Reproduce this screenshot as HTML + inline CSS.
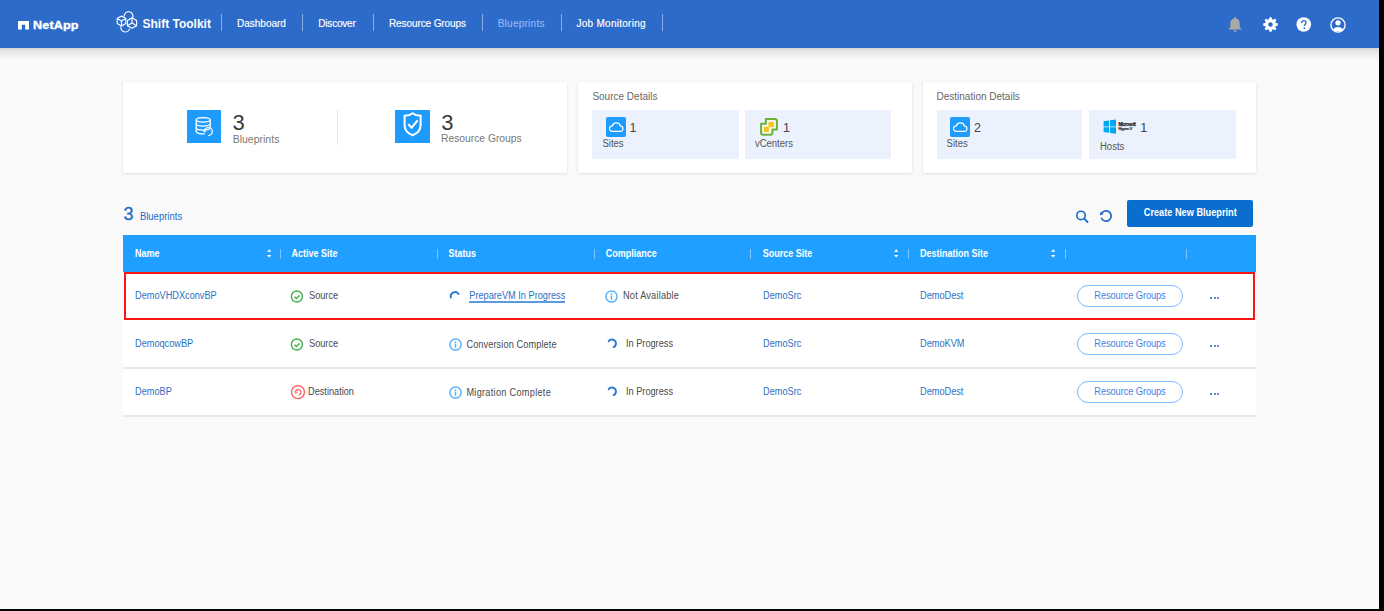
<!DOCTYPE html>
<html><head><meta charset="utf-8"><style>
html,body{margin:0;padding:0;width:1384px;height:611px;overflow:hidden;background:#fafafa;font-family:"Liberation Sans", sans-serif}
body>div,body>svg{position:absolute}
.t{line-height:1;white-space:nowrap}
</style></head><body>
<div style="left:0px;top:0px;width:1384.00px;height:47.50px;background:#2d6bcb"></div>
<div style="left:0px;top:47.5px;width:1384.00px;height:12.50px;background:linear-gradient(#d6d6d6,#e4e4e4 25%,#fafafa)"></div>
<svg style="left:18px;top:21px" width="11.2" height="8.5" viewBox="0 0 11.2 8.5"><path d="M0 0H11.2V8.5H7.2V3.8H3.8V8.5H0Z" fill="#fff"/></svg>
<div class="t" style="left:33.2px;top:19.93px;font-size:11.3px;color:#fff;font-weight:bold;letter-spacing:0.1px;transform:scale(1.12,1.0);transform-origin:0 9.57px;-webkit-text-stroke:0.35px #fff;">NetApp</div>
<svg style="left:112px;top:8px" width="30" height="28" viewBox="0 0 30 28"><g fill="none" stroke="#fff" stroke-width="1.15" stroke-linejoin="round"><path d="M9.5 8L13.8 10.5V15.5L9.5 18L5.2 15.5V10.5Z"/><path d="M5.2 10.5L9.5 13L13.8 10.5M9.5 13V18"/><path d="M20 9.7L24.6 12.4V17.7L20 20.3L15.4 17.7V12.4Z"/><path d="M20 9.7V15L15.4 17.7M20 15L24.6 17.7"/><path d="M12.2 8.6A4.4 4.4 0 1 1 20.6 9.9"/><path d="M9 18.3A4.3 4.3 0 1 0 17.6 20.6"/></g></svg>
<div class="t" style="left:142.5px;top:18.24px;font-size:12px;color:#fff;font-weight:bold;">Shift Toolkit</div>
<div style="left:221px;top:13.7px;width:1.00px;height:17.30px;background:rgba(255,255,255,.45)"></div>
<div style="left:302px;top:13.7px;width:1.00px;height:17.30px;background:rgba(255,255,255,.45)"></div>
<div style="left:373px;top:13.7px;width:1.00px;height:17.30px;background:rgba(255,255,255,.45)"></div>
<div style="left:481.5px;top:13.7px;width:1.00px;height:17.30px;background:rgba(255,255,255,.45)"></div>
<div style="left:561px;top:13.7px;width:1.00px;height:17.30px;background:rgba(255,255,255,.45)"></div>
<div style="left:662px;top:13.7px;width:1.00px;height:17.30px;background:rgba(255,255,255,.45)"></div>
<div class="t" style="left:237px;top:18.54px;font-size:10px;color:#fff;transform:scale(1.0,1.05);transform-origin:0 8.46px;-webkit-text-stroke:0.15px #fff;">Dashboard</div>
<div class="t" style="left:318.3px;top:18.54px;font-size:10px;color:#fff;letter-spacing:-0.2px;transform:scale(1.0,1.05);transform-origin:0 8.46px;-webkit-text-stroke:0.15px #fff;">Discover</div>
<div class="t" style="left:389px;top:18.54px;font-size:10px;color:#fff;letter-spacing:-0.1px;transform:scale(1.0,1.05);transform-origin:0 8.46px;-webkit-text-stroke:0.15px #fff;">Resource Groups</div>
<div class="t" style="left:497.7px;top:18.54px;font-size:10px;color:#8fb9f0;letter-spacing:0.25px;transform:scale(1.0,1.05);transform-origin:0 8.46px;-webkit-text-stroke:0.15px #8fb9f0;">Blueprints</div>
<div class="t" style="left:576.5px;top:18.54px;font-size:10px;color:#fff;letter-spacing:0.27px;transform:scale(1.0,1.05);transform-origin:0 8.46px;-webkit-text-stroke:0.15px #fff;">Job Monitoring</div>
<svg style="left:1228px;top:16px" width="14" height="17" viewBox="0 0 14 17"><path d="M7 1.2c.8 0 1.3.5 1.3 1.2 2.3.6 3.4 2.5 3.4 5v3.6l1.6 1.8v.8H.7v-.8l1.6-1.8V7.4c0-2.5 1.1-4.4 3.4-5C5.7 1.7 6.2 1.2 7 1.2zM5.4 14.2h3.2a1.6 1.6 0 0 1-3.2 0z" fill="#a9a9a9"/></svg>
<svg style="left:1262.1px;top:16.1px" width="17" height="17" viewBox="0 0 17 17"><path fill="#fff" fill-rule="evenodd" d="M13.50 6.73 L15.84 7.54 L15.84 9.46 L13.50 10.27 L13.28 10.78 L14.37 13.01 L13.01 14.37 L10.78 13.28 L10.27 13.50 L9.46 15.84 L7.54 15.84 L6.73 13.50 L6.22 13.28 L3.99 14.37 L2.63 13.01 L3.72 10.78 L3.50 10.27 L1.16 9.46 L1.16 7.54 L3.50 6.73 L3.72 6.22 L2.63 3.99 L3.99 2.63 L6.22 3.72 L6.73 3.50 L7.54 1.16 L9.46 1.16 L10.27 3.50 L10.78 3.72 L13.01 2.63 L14.37 3.99 L13.28 6.22Z M10.8 8.5 A2.3 2.3 0 1 0 6.2 8.5 A2.3 2.3 0 1 0 10.8 8.5Z"/></svg>
<svg style="left:1296px;top:17px" width="16" height="16" viewBox="0 0 16 16"><circle cx="7.75" cy="7.5" r="7.3" fill="#fff"/><path d="M5.6 5.9c0-1.4 1-2.3 2.2-2.3s2.2.8 2.2 2c0 1.5-1.6 1.6-1.6 3.3" fill="none" stroke="#2d6bcb" stroke-width="1.4"/><circle cx="8.4" cy="11.2" r=".85" fill="#2d6bcb"/></svg>
<svg style="left:1330px;top:16.5px" width="17" height="16" viewBox="0 0 17 16"><circle cx="8" cy="8" r="7.1" fill="none" stroke="#fff" stroke-width="1.3"/><circle cx="8" cy="5.8" r="2.6" fill="#fff"/><path d="M2.9 12.2Q8 8 13.1 12.2A6.6 6.6 0 0 1 2.9 12.2Z" fill="#fff"/></svg>
<div style="left:123px;top:82px;width:444.00px;height:90.50px;background:#fff;box-shadow:0 1px 3px rgba(0,0,0,.10),0 0 1px rgba(0,0,0,.06)"></div>
<div style="left:578px;top:82px;width:334.00px;height:90.50px;background:#fff;box-shadow:0 1px 3px rgba(0,0,0,.10),0 0 1px rgba(0,0,0,.06)"></div>
<div style="left:923px;top:82px;width:333.00px;height:90.50px;background:#fff;box-shadow:0 1px 3px rgba(0,0,0,.10),0 0 1px rgba(0,0,0,.06)"></div>
<div style="left:187px;top:109.5px;width:34.00px;height:33.50px;background:#1e9bff"></div>
<svg style="left:186px;top:108px" width="36" height="36" viewBox="0 0 36 36"><g fill="none" stroke="#fff" stroke-width="1.25" stroke-linecap="round"><ellipse cx="17.2" cy="11.8" rx="7" ry="2.3"/><path d="M10.2 11.8V23.6M24.2 11.8V18.5"/><path d="M10.2 15.7A7 2.3 0 0 0 24.2 15.7M10.2 19.7A7 2.3 0 0 0 24.2 19.7M10.2 23.6A7 2.3 0 0 0 18.3 25.9"/><path d="M18.3 23.4A4 4 0 1 1 22.6 27.5"/></g><circle cx="18.6" cy="23.4" r="1.1" fill="#fff"/></svg>
<div class="t" style="left:232.5px;top:111.98px;font-size:22px;color:#3a3a3a;">3</div>
<div class="t" style="left:232.7px;top:134.31px;font-size:10.5px;color:#777;transform:scale(1.0,1.05);transform-origin:0 8.89px;">Blueprints</div>
<div style="left:337px;top:109.5px;width:1.00px;height:35.50px;background:#e6e6e6"></div>
<div style="left:395px;top:109.5px;width:34.70px;height:33.50px;background:#1e9bff"></div>
<svg style="left:394px;top:108px" width="36" height="36" viewBox="0 0 36 36"><path d="M18.6 5.3C20.6 6.9 23.6 7.7 26.6 7.8V17C26.6 22 23 25.5 18.6 27.2 14.2 25.5 10.6 22 10.6 17V7.8C13.6 7.7 16.6 6.9 18.6 5.3Z" fill="none" stroke="#fff" stroke-width="2"/><path d="M14.3 16.3L17.6 19.7 23.6 12.4" fill="none" stroke="#fff" stroke-width="2.2"/></svg>
<div class="t" style="left:441.3px;top:111.98px;font-size:22px;color:#3a3a3a;">3</div>
<div class="t" style="left:441px;top:134.48px;font-size:10.3px;color:#777;transform:scale(1.0,1.05);transform-origin:0 8.72px;">Resource Groups</div>
<div class="t" style="left:592.4px;top:91.73px;font-size:10px;color:#666;transform:scale(1.0,1.05);transform-origin:0 8.46px;">Source Details</div>
<div style="left:592px;top:109.6px;width:147.00px;height:49.00px;background:#ebf2fd"></div>
<div style="left:605.5px;top:117px;width:20.30px;height:20.00px;background:#1e9bff;border-radius:2px"></div>
<svg style="left:605.5px;top:117px" width="20" height="20" viewBox="0 0 20 20"><path d="M6.2 14.4A2.8 2.8 0 0 1 6.4 8.8A4.2 4.2 0 0 1 14.5 9.2A2.6 2.6 0 0 1 14.1 14.4Z" fill="none" stroke="#fff" stroke-width="1.2"/></svg>
<div class="t" style="left:629.5px;top:121.62px;font-size:12.5px;color:#444;">1</div>
<div class="t" style="left:602.5px;top:139.26px;font-size:9.5px;color:#555;transform:scale(1.0,1.1);transform-origin:0 8.04px;">Sites</div>
<div style="left:745px;top:109.6px;width:146.00px;height:49.00px;background:#ebf2fd"></div>
<svg style="left:756px;top:114px" width="26" height="26" viewBox="0 0 26 26"><path d="M9.8 4.9H18.9Q20.9 4.9 20.9 6.9V15.4H16.4V18.7Q16.4 20.7 14.4 20.7H7.1Q5.1 20.7 5.1 18.7V9.8H9.8Z" fill="#f4f9ee" stroke="#6ab23c" stroke-width="2" stroke-linejoin="round"/><rect x="7.8" y="12.7" width="5.1" height="5.3" fill="#f8c41a"/><rect x="12.5" y="8" width="5.3" height="5.1" fill="#f8c41a"/></svg>
<div class="t" style="left:783px;top:121.62px;font-size:12.5px;color:#444;">1</div>
<div class="t" style="left:754.9px;top:139.36px;font-size:9.5px;color:#555;transform:scale(1.0,1.1);transform-origin:0 8.04px;">vCenters</div>
<div class="t" style="left:936.5px;top:91.73px;font-size:10px;color:#666;transform:scale(1.0,1.05);transform-origin:0 8.46px;">Destination Details</div>
<div style="left:937px;top:109.6px;width:145.00px;height:49.00px;background:#ebf2fd"></div>
<div style="left:950px;top:117px;width:20.30px;height:20.00px;background:#1e9bff;border-radius:2px"></div>
<svg style="left:950px;top:117px" width="20" height="20" viewBox="0 0 20 20"><path d="M6.2 14.4A2.8 2.8 0 0 1 6.4 8.8A4.2 4.2 0 0 1 14.5 9.2A2.6 2.6 0 0 1 14.1 14.4Z" fill="none" stroke="#fff" stroke-width="1.2"/></svg>
<div class="t" style="left:974px;top:121.62px;font-size:12.5px;color:#444;">2</div>
<div class="t" style="left:946.6px;top:139.26px;font-size:9.5px;color:#555;transform:scale(1.0,1.1);transform-origin:0 8.04px;">Sites</div>
<div style="left:1089px;top:109.6px;width:147.00px;height:49.00px;background:#ebf2fd"></div>
<svg style="left:1100px;top:115px" width="20" height="23" viewBox="0 0 20 23"><path d="M3.6 6.2L9 5.4V11.4H3.6Z M9.9 5.3L16 4.5V11.4H9.9Z M3.6 12.2H9V17.8L3.6 16.9Z M9.9 12.2H16V18.8L9.9 17.9Z" fill="#00a6ef"/></svg>
<div class="t" style="left:1118.4px;top:123.31px;font-size:4.6px;color:#2a2a2a;font-weight:bold;letter-spacing:-0.4px;-webkit-text-stroke:0.25px #2a2a2a;">Microsoft</div>
<div class="t" style="left:1118.4px;top:127.98px;font-size:3.8px;color:#2a2a2a;font-weight:bold;letter-spacing:-0.1px;-webkit-text-stroke:0.2px #2a2a2a;">Hyper-V</div>
<div class="t" style="left:1140.3px;top:121.62px;font-size:12.5px;color:#444;">1</div>
<div class="t" style="left:1100px;top:142.46px;font-size:9.5px;color:#555;transform:scale(1.0,1.1);transform-origin:0 8.04px;">Hosts</div>
<div class="t" style="left:123.5px;top:204.76px;font-size:18px;color:#1a6bc8;-webkit-text-stroke:0.3px #1a6bc8;">3</div>
<div class="t" style="left:139.9px;top:211.66px;font-size:9.5px;color:#1a6bc8;transform:scale(1.0,1.1);transform-origin:0 8.04px;">Blueprints</div>
<svg style="left:1075px;top:210px" width="15" height="14" viewBox="0 0 15 14"><circle cx="6" cy="5.4" r="4.2" fill="none" stroke="#1a6bc8" stroke-width="1.6"/><path d="M9.2 8.7l3.3 3.3" stroke="#1a6bc8" stroke-width="1.8" stroke-linecap="round"/></svg>
<svg style="left:1099px;top:209px" width="14" height="14" viewBox="0 0 14 14"><path d="M2.3 4.9A5.15 5.15 0 1 1 2.53 9.45" fill="none" stroke="#1a6bc8" stroke-width="1.7" stroke-linecap="round"/><path d="M0.9 6.6L1.4 3.0 4.6 4.9Z" fill="#1a6bc8"/></svg>
<div style="left:1127px;top:200px;width:126.00px;height:26.50px;background:#0a6ecf;border-radius:2px"></div>
<div class="t" style="left:1143.8px;top:209.11px;font-size:9.2px;color:#fff;font-weight:bold;transform:scale(1.0,1.12);transform-origin:0 7.79px;">Create New Blueprint</div>
<div style="left:123px;top:235px;width:1133.00px;height:37.00px;background:#1f9fff"></div>
<div class="t" style="left:135px;top:249.78px;font-size:9px;color:#fff;font-weight:bold;transform:scale(1.0,1.15);transform-origin:0 7.62px;">Name</div>
<div class="t" style="left:291.6px;top:249.78px;font-size:9px;color:#fff;font-weight:bold;transform:scale(1.0,1.15);transform-origin:0 7.62px;">Active Site</div>
<div class="t" style="left:448.6px;top:249.78px;font-size:9px;color:#fff;font-weight:bold;transform:scale(1.0,1.15);transform-origin:0 7.62px;">Status</div>
<div class="t" style="left:605.7px;top:249.78px;font-size:9px;color:#fff;font-weight:bold;transform:scale(1.0,1.15);transform-origin:0 7.62px;">Compliance</div>
<div class="t" style="left:762.8px;top:249.78px;font-size:9px;color:#fff;font-weight:bold;transform:scale(1.0,1.15);transform-origin:0 7.62px;">Source Site</div>
<div class="t" style="left:920px;top:249.78px;font-size:9px;color:#fff;font-weight:bold;transform:scale(1.0,1.15);transform-origin:0 7.62px;">Destination Site</div>
<div style="left:279.5px;top:248.7px;width:1.20px;height:10.00px;background:rgba(255,255,255,.4)"></div>
<div style="left:437px;top:248.7px;width:1.20px;height:10.00px;background:rgba(255,255,255,.4)"></div>
<div style="left:594.2px;top:248.7px;width:1.20px;height:10.00px;background:rgba(255,255,255,.4)"></div>
<div style="left:750.2px;top:248.7px;width:1.20px;height:10.00px;background:rgba(255,255,255,.4)"></div>
<div style="left:907.5px;top:248.7px;width:1.20px;height:10.00px;background:rgba(255,255,255,.4)"></div>
<div style="left:1064.8px;top:248.7px;width:1.20px;height:10.00px;background:rgba(255,255,255,.4)"></div>
<div style="left:1186.3px;top:248.7px;width:1.20px;height:10.00px;background:rgba(255,255,255,.4)"></div>
<svg style="left:266.8px;top:248px" width="5" height="11" viewBox="0 0 5 11"><path d="M0 3.7L2.2 1.3 4.4 3.7Z M0 6.9L2.2 9.5 4.4 6.9Z" fill="#fff"/></svg>
<svg style="left:894.3px;top:248px" width="5" height="11" viewBox="0 0 5 11"><path d="M0 3.7L2.2 1.3 4.4 3.7Z M0 6.9L2.2 9.5 4.4 6.9Z" fill="#fff"/></svg>
<svg style="left:1051.3px;top:248px" width="5" height="11" viewBox="0 0 5 11"><path d="M0 3.7L2.2 1.3 4.4 3.7Z M0 6.9L2.2 9.5 4.4 6.9Z" fill="#fff"/></svg>
<div style="left:123px;top:272px;width:1133.00px;height:143.00px;background:#fff"></div>
<div style="left:123px;top:367px;width:1133.00px;height:2.00px;background:#e9e9e9"></div>
<div style="left:123px;top:415px;width:1133.00px;height:2.00px;background:#e9e9e9"></div>
<div style="left:124px;top:272px;width:1131.00px;height:47.50px;border:2px solid #fa1414;box-sizing:border-box"></div>
<div style="left:1077px;top:285.2px;width:106.00px;height:22.00px;border:1.6px solid #7abdff;border-radius:11px;box-sizing:border-box"></div>
<div class="t" style="left:1094.3px;top:291.53px;font-size:9.3px;color:#4a80de;letter-spacing:-0.1px;transform:scale(1.0,1.1);transform-origin:0 7.87px;">Resource Groups</div>
<div style="left:1210.2px;top:297.09999999999997px;width:2.20px;height:2.20px;background:#3468c2;border-radius:50%"></div>
<div style="left:1213.7px;top:297.09999999999997px;width:2.20px;height:2.20px;background:#3468c2;border-radius:50%"></div>
<div style="left:1217.2px;top:297.09999999999997px;width:2.20px;height:2.20px;background:#3468c2;border-radius:50%"></div>
<div class="t" style="left:763px;top:292.11px;font-size:9.2px;color:#2a6fc4;transform:scale(1.0,1.15);transform-origin:0 7.79px;">DemoSrc</div>
<div class="t" style="left:920px;top:292.11px;font-size:9.2px;color:#2a6fc4;transform:scale(1.0,1.15);transform-origin:0 7.79px;">DemoDest</div>
<div style="left:1077px;top:333.2px;width:106.00px;height:22.00px;border:1.6px solid #7abdff;border-radius:11px;box-sizing:border-box"></div>
<div class="t" style="left:1094.3px;top:339.53px;font-size:9.3px;color:#4a80de;letter-spacing:-0.1px;transform:scale(1.0,1.1);transform-origin:0 7.87px;">Resource Groups</div>
<div style="left:1210.2px;top:345.09999999999997px;width:2.20px;height:2.20px;background:#3468c2;border-radius:50%"></div>
<div style="left:1213.7px;top:345.09999999999997px;width:2.20px;height:2.20px;background:#3468c2;border-radius:50%"></div>
<div style="left:1217.2px;top:345.09999999999997px;width:2.20px;height:2.20px;background:#3468c2;border-radius:50%"></div>
<div class="t" style="left:763px;top:340.11px;font-size:9.2px;color:#2a6fc4;transform:scale(1.0,1.15);transform-origin:0 7.79px;">DemoSrc</div>
<div class="t" style="left:920px;top:340.11px;font-size:9.2px;color:#2a6fc4;transform:scale(1.0,1.15);transform-origin:0 7.79px;">DemoKVM</div>
<div style="left:1077px;top:381.2px;width:106.00px;height:22.00px;border:1.6px solid #7abdff;border-radius:11px;box-sizing:border-box"></div>
<div class="t" style="left:1094.3px;top:387.53px;font-size:9.3px;color:#4a80de;letter-spacing:-0.1px;transform:scale(1.0,1.1);transform-origin:0 7.87px;">Resource Groups</div>
<div style="left:1210.2px;top:393.09999999999997px;width:2.20px;height:2.20px;background:#3468c2;border-radius:50%"></div>
<div style="left:1213.7px;top:393.09999999999997px;width:2.20px;height:2.20px;background:#3468c2;border-radius:50%"></div>
<div style="left:1217.2px;top:393.09999999999997px;width:2.20px;height:2.20px;background:#3468c2;border-radius:50%"></div>
<div class="t" style="left:763px;top:388.11px;font-size:9.2px;color:#2a6fc4;transform:scale(1.0,1.15);transform-origin:0 7.79px;">DemoSrc</div>
<div class="t" style="left:920px;top:388.11px;font-size:9.2px;color:#2a6fc4;transform:scale(1.0,1.15);transform-origin:0 7.79px;">DemoDest</div>
<div class="t" style="left:135px;top:292.11px;font-size:9.2px;color:#2a6fc4;transform:scale(1.0,1.15);transform-origin:0 7.79px;">DemoVHDXconvBP</div>
<div class="t" style="left:135px;top:340.11px;font-size:9.2px;color:#2a6fc4;transform:scale(1.0,1.15);transform-origin:0 7.79px;">DemoqcowBP</div>
<div class="t" style="left:135px;top:388.11px;font-size:9.2px;color:#2a6fc4;transform:scale(1.0,1.15);transform-origin:0 7.79px;">DemoBP</div>
<svg style="left:290.3px;top:290px" width="14" height="14" viewBox="0 0 14 14"><circle cx="6.9" cy="6.5" r="5.5" fill="none" stroke="#43b04a" stroke-width="1.4"/><path d="M4.5 6.8l1.8 1.7 3-3" fill="none" stroke="#43b04a" stroke-width="1.5"/></svg>
<div class="t" style="left:309px;top:292.11px;font-size:9.2px;color:#4a4a4a;transform:scale(1.0,1.15);transform-origin:0 7.79px;">Source</div>
<svg style="left:290.3px;top:338px" width="14" height="14" viewBox="0 0 14 14"><circle cx="6.9" cy="6.5" r="5.5" fill="none" stroke="#43b04a" stroke-width="1.4"/><path d="M4.5 6.8l1.8 1.7 3-3" fill="none" stroke="#43b04a" stroke-width="1.5"/></svg>
<div class="t" style="left:309px;top:340.11px;font-size:9.2px;color:#4a4a4a;transform:scale(1.0,1.15);transform-origin:0 7.79px;">Source</div>
<svg style="left:287px;top:382px" width="22" height="20" viewBox="0 0 22 20"><circle cx="11" cy="10.1" r="6.5" fill="none" stroke="#ff5a5a" stroke-width="1.3"/><path d="M8.6 10.6A2.7 2.7 0 1 1 11.6 13" fill="none" stroke="#ff6a6a" stroke-width="1.2"/><path d="M7.4 9.6l1.3 1.8 1.6-1.4" fill="none" stroke="#ff6a6a" stroke-width="1"/></svg>
<div class="t" style="left:308px;top:388.11px;font-size:9.2px;color:#4a4a4a;transform:scale(1.0,1.15);transform-origin:0 7.79px;">Destination</div>
<svg style="left:446px;top:287px" width="18" height="18" viewBox="0 0 18 18"><path d="M4.85 10.6A4.3 4.3 0 0 1 12.5 7" fill="none" stroke="#2b7bd0" stroke-width="2" stroke-linecap="round"/></svg>
<div class="t" style="left:469.3px;top:292.11px;font-size:9.2px;color:#2a6fc4;transform:scale(1.0,1.15);transform-origin:0 7.79px;">PrepareVM In Progress</div>
<div style="left:469.3px;top:301.2px;width:96.20px;height:1.40px;background:#5a9be0"></div>
<svg style="left:448.5px;top:337.8px" width="14" height="14" viewBox="0 0 14 14"><circle cx="6.5" cy="6.5" r="5.6" fill="none" stroke="#5ab4ff" stroke-width="1.5"/><circle cx="6.5" cy="3.9" r=".85" fill="#5ab4ff"/><path d="M6.5 5.9v3.3" stroke="#5ab4ff" stroke-width="1.5" stroke-linecap="round"/></svg>
<div class="t" style="left:466.4px;top:340.81px;font-size:9.2px;color:#4a4a4a;letter-spacing:0.1px;transform:scale(1.0,1.15);transform-origin:0 7.79px;">Conversion Complete</div>
<svg style="left:448.5px;top:385.8px" width="14" height="14" viewBox="0 0 14 14"><circle cx="6.5" cy="6.5" r="5.6" fill="none" stroke="#5ab4ff" stroke-width="1.5"/><circle cx="6.5" cy="3.9" r=".85" fill="#5ab4ff"/><path d="M6.5 5.9v3.3" stroke="#5ab4ff" stroke-width="1.5" stroke-linecap="round"/></svg>
<div class="t" style="left:466.4px;top:388.81px;font-size:9.2px;color:#4a4a4a;letter-spacing:0.28px;transform:scale(1.0,1.15);transform-origin:0 7.79px;">Migration Complete</div>
<svg style="left:605px;top:290px" width="14" height="14" viewBox="0 0 14 14"><circle cx="6.5" cy="6.5" r="5.6" fill="none" stroke="#5ab4ff" stroke-width="1.5"/><circle cx="6.5" cy="3.9" r=".85" fill="#5ab4ff"/><path d="M6.5 5.9v3.3" stroke="#5ab4ff" stroke-width="1.5" stroke-linecap="round"/></svg>
<div class="t" style="left:623px;top:292.11px;font-size:9.2px;color:#4a4a4a;letter-spacing:0.2px;transform:scale(1.0,1.15);transform-origin:0 7.79px;">Not Available</div>
<svg style="left:603px;top:334px" width="18" height="18" viewBox="0 0 18 18"><path d="M5.7 7.2A4 4 0 1 1 10.7 13.1" fill="none" stroke="#2b7bd0" stroke-width="2" stroke-linecap="round"/></svg>
<div class="t" style="left:626px;top:340.11px;font-size:9.2px;color:#4a4a4a;transform:scale(1.0,1.15);transform-origin:0 7.79px;">In Progress</div>
<svg style="left:603px;top:382px" width="18" height="18" viewBox="0 0 18 18"><path d="M5.7 7.2A4 4 0 1 1 10.7 13.1" fill="none" stroke="#2b7bd0" stroke-width="2" stroke-linecap="round"/></svg>
<div class="t" style="left:626px;top:388.11px;font-size:9.2px;color:#4a4a4a;transform:scale(1.0,1.15);transform-origin:0 7.79px;">In Progress</div>
<div style="left:1379px;top:0px;width:5.00px;height:611.00px;background:#000"></div>
<div style="left:0px;top:609px;width:1384.00px;height:2.00px;background:#000"></div>
</body></html>
